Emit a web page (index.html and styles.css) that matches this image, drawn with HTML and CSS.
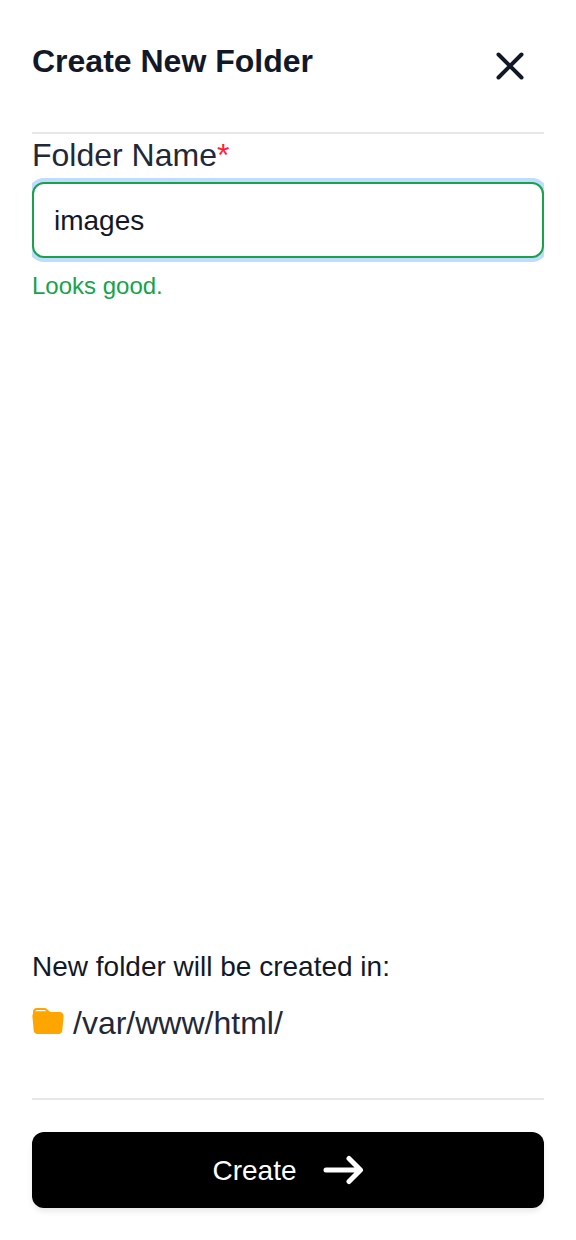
FILE: index.html
```html
<!DOCTYPE html>
<html lang="en">
<head>
  <meta charset="UTF-8">
  <title>Create New Folder</title>
  <link rel="stylesheet" href="styles.css">
</head>
<body>
  <div class="panel">
    <div class="panel-header">
      <h1 class="panel-title">Create New Folder</h1>
      <button type="button" class="close-btn" aria-label="Close">
        <svg width="28" height="28" viewBox="0 0 28 28" fill="none" stroke="#111827" stroke-width="4" stroke-linecap="round">
          <path d="M2.500 2.500l23 23M25.500 2.500l-23 23"/>
        </svg>
      </button>
    </div>

    <form class="panel-body">
      <label class="field-label" for="folder_name">Folder Name<span class="required">*</span></label>
      <input type="text" id="folder_name" class="field-input" value="images">
      <div class="field-valid">Looks good.</div>
    </form>

    <div class="location">
      <div class="location-label">New folder will be created in:</div>
      <div class="location-path">
        <svg class="folder-icon" width="32" height="32" viewBox="0 0 16 16" fill="#ffa500" fill-rule="evenodd">
          <path d="M9.828 3h3.982a2 2 0 0 1 1.992 2.181l-.637 7A2 2 0 0 1 13.174 14H2.825a2 2 0 0 1-1.991-1.819l-.637-7a1.990 1.990 0 0 1 .342-1.310L.5 3a2 2 0 0 1 2-2h3.672a2 2 0 0 1 1.414.586l.828.828A2 2 0 0 0 9.828 3zM1.550 2.750C1.720 2.660 1.950 2.600 2.190 2.600H7.200l-.320-.310A1 1 0 0 0 6.172 2H2.500a1 1 0 0 0-.950.750z"/>
        </svg>
        <span>/var/www/html/</span>
      </div>
    </div>

    <div class="panel-footer">
      <button type="button" class="create-btn">
        <span class="create-text">Create</span>
        <svg width="41" height="30" viewBox="0 0 41 30" fill="none" stroke="#fff" stroke-width="5" stroke-linecap="round" stroke-linejoin="round">
          <path d="M3 15h34M26 3.500l11.500 11.500L26 26.500"/>
        </svg>
      </button>
    </div>
  </div>
</body>
</html>
```

FILE: styles.css
```css
* { box-sizing: border-box; }
body { margin: 0; background: #fff; font-family: "Liberation Sans", Arial, sans-serif; }
.panel { display: flex; flex-direction: column; height: 1240px; padding: 0 32px 32px; }
.panel-header { display: flex; justify-content: space-between; align-items: flex-start; height: 134px; padding-top: 42px; border-bottom: 2px solid #e5e7eb; }
.panel-title { margin: 0; font-size: 32px; line-height: 38px; font-weight: 700; color: #111827; }
.close-btn { display: flex; margin: 10px 20px 0 0; padding: 0; border: none; background: none; cursor: pointer; }
.panel-body { flex: 1; overflow-x: clip; }
.field-label { display: block; margin: 3px 0 9px; font-size: 32px; line-height: 36px; color: #1f2937; }
.required { color: #ff2233; }
.field-input { display: block; width: 100%; height: 76px; padding: 2px 20px 0; border: 2px solid #16a34a; border-radius: 12px; outline: none; font-family: inherit; font-size: 28px; color: #111827; box-shadow: 0 0 0 4px #bfdbfe; }
.field-valid { margin-top: 12px; font-size: 24px; line-height: 32px; color: #16a34a; }
.location { padding-bottom: 55px; }
.location-label { font-size: 28px; line-height: 36px; color: #111827; }
.location-path { display: flex; align-items: center; gap: 9px; margin-top: 18px; font-size: 32px; line-height: 40px; color: #1f2937; }
.folder-icon { flex: none; margin-bottom: 2px; }
.panel-footer { padding-top: 32px; border-top: 2px solid #e5e7eb; }
.create-btn { display: flex; justify-content: center; align-items: center; gap: 26px; width: 100%; height: 76px; border: none; border-radius: 12px; background: #000; color: #fff; font-family: inherit; font-size: 28px; box-shadow: 0 4px 6px -1px rgba(0,0,0,0.1); cursor: pointer; }
.create-text { margin-top: 2px; }
```
